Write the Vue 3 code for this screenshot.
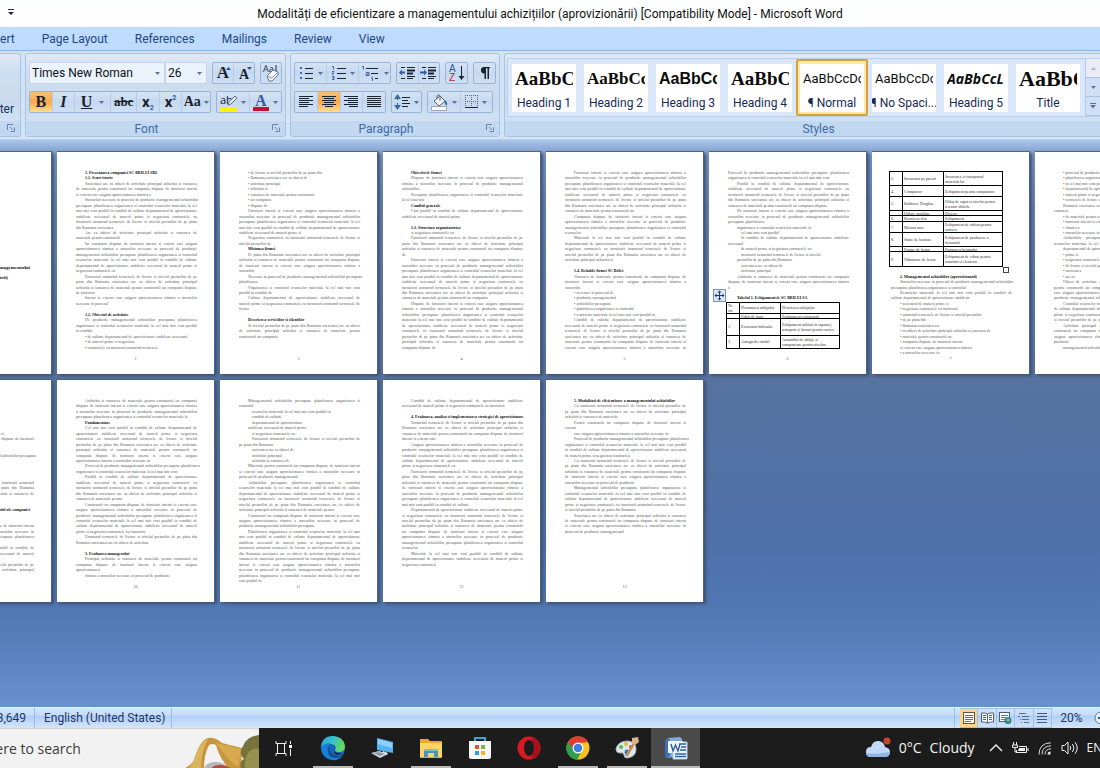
<script setup>
import { h } from 'vue'

const Caret = () =>
  h('svg', { class: 'caret', viewBox: '0 0 5 3', width: 5, height: 3, 'aria-hidden': 'true' }, [
    h('path', { d: 'M0 0h5L2.500 3z', fill: '#5b7396' })
  ])

const Launcher = () =>
  h('svg', { class: 'launcher', viewBox: '0 0 8 8', width: 8, height: 8, 'aria-hidden': 'true' }, [
    h('path', { d: 'M.5 6V.5H6', fill: 'none', stroke: '#6785ad' }),
    h('path', { d: 'M3 3l3 3M7.500 3.500v4h-4', fill: 'none', stroke: '#6785ad' })
  ])

// Draws text rows as horizontal bars: each entry is [x, y, width].
const Lines = (props) =>
  h('svg', { viewBox: '0 0 16 14', width: 16, height: 14, 'aria-hidden': 'true' },
    props.rows.map(([x, y, w]) => h('rect', { x, y, width: w, height: 1, fill: '#1c2330' })))
Lines.props = ['rows']

const alignRows = {
  left: [[1, 1, 14], [1, 3, 10], [1, 5, 14], [1, 7, 10], [1, 9, 14], [1, 11, 9]],
  center: [[1, 1, 14], [3, 3, 10], [1, 5, 14], [3, 7, 10], [1, 9, 14], [4, 11, 8]],
  right: [[1, 1, 14], [5, 3, 10], [1, 5, 14], [5, 7, 10], [1, 9, 14], [6, 11, 9]],
  justify: [[1, 1, 14], [1, 3, 14], [1, 5, 14], [1, 7, 14], [1, 9, 14], [1, 11, 14]]
}

const tabs = ['Insert', 'Page Layout', 'References', 'Mailings', 'Review', 'View']

const styles = [
  { sample: 'AaBbC', name: 'Heading 1', look: 'serif-lg' },
  { sample: 'AaBbCcI', name: 'Heading 2', look: 'serif-md' },
  { sample: 'AaBbCc', name: 'Heading 3', look: 'sans-bold' },
  { sample: 'AaBbC', name: 'Heading 4', look: 'serif-lg' },
  { sample: 'AaBbCcDc', name: '¶ Normal', look: 'plain', on: true },
  { sample: 'AaBbCcDc', name: '¶ No Spaci...', look: 'plain' },
  { sample: 'AaBbCcL', name: 'Heading 5', look: 'bold-italic' },
  { sample: 'AaBbC', name: 'Title', look: 'serif-xl' }
]

const words = ('societatea are ca obiect de activitate principal achizitia si vanzarea de materiale pentru ' +
  'constructii iar compania dispune de furnizori interni si externi care asigura aprovizionarea ritmica ' +
  'a stocurilor necesare in procesul de productie managementul achizitiilor presupune planificarea ' +
  'organizarea si controlul resurselor materiale la cel mai mic cost posibil in conditii de calitate ' +
  'departamentul de aprovizionare stabileste necesarul de materii prime si negociaza contractele cu ' +
  'furnizorii urmarind termenele de livrare si nivelul preturilor de pe piata din Romania').split(' ')
let cursor = 0
const WIDTH = 121
const fill = (px) => {
  const max = px / 1.6
  let out = ''
  while (true) {
    const w = words[cursor % words.length]
    if (out && out.length + w.length + 1 > max) break
    out += (out ? ' ' : '') + w
    cursor++
    if (out.length >= max) break
  }
  return out
}
const cap = (s) => s.charAt(0).toUpperCase() + s.slice(1)

const line = (kind, indent, end, text) => ({ kind: kind === 'line' && end === WIDTH ? 'line full' : kind, indent, width: end - indent, text })
const P = (n, last = WIDTH, indent = 9) =>
  Array.from({ length: n }, (_, i) => {
    const start = i === 0 ? indent : 0
    const end = i === n - 1 ? last : WIDTH
    const t = fill(end - start)
    return line('line', start, end, i === 0 ? cap(t) : t)
  })
const L = (...ends) => ends.map((e) => line('line', 9, e, '• ' + fill(e - 9)))
const S = (indent, ...ends) => ends.map((e) => line('line', indent, e, fill(e - indent + 3)))
const H = (text, end = 80) => [line('head', 9, end, text)]
const B = (n = 1) => Array.from({ length: n }, () => line('blank', 0, 0, ''))
const T = (span, rows) => [{ kind: 'table', span, rows }]

const pages = [
  { cover: true, lines: [] },
  { no: '2', lines: [
    H('1. Prezentarea companiei SC BRILEI SRL', 79), H('1.1. Scurt istoric', 33), P(3, 79), P(6, 41), P(2, 46),
    P(6, 49), P(4, 27), P(2, 36), B(), H('1.2. Obiectul de activitate', 50), P(3, 20), L(111, 63, 84)
  ] },
  { no: '3', lines: [
    L(93, 79, 48, 40, 73, 31, 36), P(5, 71), P(2, 38), H('Misiunea firmei', 39), P(4, 28), P(2, 12),
    P(2, 41), P(3, 14), B(), H('Descrierea serviciilor si clientilor', 72), P(3, 40)
  ] },
  { no: '4', lines: [
    H('Obiectivele firmei', 41), P(3, 25), P(2, 24), H('Conditii generale', 33), P(2, 63), B(),
    H('1.3. Structura organizatorica', 48), S(9, 64), P(4, 10), P(8, 85), P(9, 32)
  ] },
  { no: '5', lines: [
    P(8, 84), P(4, 13), P(5, 53), B(), H('1.4. Relatiile firmei SC Brilei', 68), P(3, 14),
    L(46, 50, 59, 69, 94), P(6)
  ] },
  { no: '6', anchor: true, lines: [
    P(2, 115, 0), P(5, 99), P(3, 42), S(9, 87), S(13, 53), P(2, 17, 13), S(13, 91, 106), S(9, 77), S(13, 64, 57),
    P(3, 9), B(), H('Tabelul 1. Echipamentele SC BRILEI SA', 75),
    T(9, [[11, 'Nr. crt.', 'Denumirea utilajului', 'Descrierea utilajului'], [5, '', 'Utilaj de baza', 'Echipament constructii'],
      [17, '1.', 'Excavator hidraulic', 'Echipament utilizat la sapaturi, transport si lucrari pentru cariere'],
      [13, '2.', 'Autogreder mobil', 'Ansamblu de utilaje si componente pentru nivelare']])
  ] },
  { no: '7', handle: true, lines: [
    T(19, [[14, '3.', 'Incarcator pe pneuri', 'Incarcarea si transportul materialelor'], [11, '4.', 'Compactor', 'Echipament pentru compactare'],
      [14, '5.', 'Buldozer Dragline', 'Utilaj de sapat si nivelat pentru terenuri dificile'], [5, '', 'Utilaje auxiliare', 'Diverse'],
      [6, '6.', 'Betoniera fixa', 'Echipament'], [11, '7.', 'Macara turn', 'Echipament de ridicat pentru santiere'],
      [14, '8.', 'Statie de betoane', 'Echipament de producere a betonului'], [5, '', 'Pompe de beton', 'Pomparea betonului'],
      [15, '9.', 'Vibratoare de beton', 'Echipament de vibrat pentru structuri si elemente']]),
    H('2. Managementul achizitiilor (aprovizionarii)', 92), P(2, 81), P(2, 94),
    L(59, 67, 92, 44, 45, 108, 65, 70), S(9, 81), L(61)
  ] },
  { no: '8', lines: [
    L(110, 104, 112, 108, 116, 110), P(2, 13), L(112, 100, 36, 108), P(2), S(9, 110), L(33, 100, 108, 25, 24),
    P(4), P(4), P(4, 33), S(9, 116)
  ] },
  { no: '9', lines: [
    S(0, 89, 88, 60, 70, 50, 88, 106), P(1, WIDTH, 0), S(0, 50, 60), P(1, WIDTH, 9), S(0, 60, 70, 50, 80), P(3), B(2),
    [line('head', 20, 121, '2.3. Particularitatile procesului de achizitii ale companiei')], B(2), P(3), S(0, 40), P(2), S(0, 60), P(2)
  ] },
  { no: '10', lines: [
    P(4, 118), H('Fundamentare', 27), P(7, 83), P(2, 107), P(5, 59), P(6, 71), P(2, 87), B(),
    H('3. Evaluarea managerului', 57), P(3, 27), S(9, 110)
  ] },
  { no: '11', lines: [
    P(2, 14), S(13, 104, 64, 65), S(9, 66), S(13, 65), P(2, 36, 13), S(13, 63, 52, 59), P(3, 69), P(6, 115), P(3, 79), P(10, 38)
  ] },
  { no: '12', lines: [
    P(2, 105), B(), H('4. Evaluarea, analiza si implementarea strategiei de aprovizionare', 121),
    P(4, 37), P(5, 66), P(7, 90), P(8, 21), P(3, 37)
  ] },
  { no: '13', lines: [
    H('5. Modalitati de eficientizare a managementului achizitiilor', 112), P(3, 62), P(2, 17), S(9, 107),
    P(4, 66), P(5, 84), P(5, 75), P(4, 58)
  ] }
].map((p) => ({ ...p, lines: p.lines.flat() }))
const sheetRows = [pages.slice(0, 8), pages.slice(8)]
</script>

<template>
  <div class="word">
    <header class="titlebar">
      <button class="qat" aria-label="Customize Quick Access Toolbar">
        <svg width="6" height="7" viewBox="0 0 6 7"><path d="M0 0h6v1H0zM0 3h6L3 6z" fill="#222b45" /></svg>
      </button>
      <h1>Modalități de eficientizare a managementului achizițiilor (aprovizionării) [Compatibility Mode] - Microsoft Word</h1>
    </header>

    <nav class="tabs">
      <button v-for="t in tabs" :key="t">{{ t }}</button>
    </nav>

    <section class="ribbon">
      <div class="group clipboard">
        <div class="body"><span>Format Painter</span></div>
        <footer><Launcher /></footer>
      </div>

      <div class="group font">
        <div class="body">
          <div class="row">
            <div class="combos">
              <label class="combo family"><select aria-label="Font"><option>Times New Roman</option></select><Caret /></label>
              <label class="combo size"><select aria-label="Font size"><option>26</option></select><Caret /></label>
            </div>
            <div class="set grow">
              <button aria-label="Grow font"><span class="ser g1">A</span><svg class="tip" width="5" height="3" viewBox="0 0 5 3"><path d="M0 3h5L2.500 0z" fill="#2d4f94" /></svg></button>
              <button aria-label="Shrink font"><span class="ser g2">A</span><svg class="tip" width="5" height="3" viewBox="0 0 5 3"><path d="M0 0h5L2.500 3z" fill="#2d4f94" /></svg></button>
            </div>
            <div class="set one">
              <button aria-label="Clear formatting">
                <svg width="20" height="20" viewBox="0 0 20 20">
                  <text x="2" y="9" font-family="Open Sans, sans-serif" font-size="9" fill="#1f2a44">Aa</text><path d="M15 2v8" stroke="#1f2a44" />
                  <path d="M6 13l6-6 5 2v3l-6 6H8z" fill="#f3f5fa" stroke="#66738f" /><path d="M6 13l5 2 6-6" fill="none" stroke="#8c98b2" />
                </svg>
              </button>
            </div>
          </div>
          <div class="row">
            <div class="set letters">
              <button class="on ser b">B</button>
              <button class="ser i">I</button>
              <button class="ser u wide"><span>U</span><Caret /></button>
              <button class="ser s">abc</button>
              <button class="sx">x<sub>2</sub></button>
              <button class="sx">x<sup>2</sup></button>
              <button class="ser aa"><span>Aa</span><Caret /></button>
            </div>
            <div class="set colors">
              <button aria-label="Highlight">
                <svg width="18" height="19" viewBox="0 0 18 19">
                  <rect y="14" width="17" height="4" fill="#fff200" />
                  <text x="0" y="11" font-family="Open Sans, sans-serif" font-size="11" fill="#1a2030">ab</text>
                  <path d="M8 12l1-3 6-6 2 2-6 6z" fill="#e8edf4" stroke="#60708c" />
                </svg><Caret />
              </button>
              <button aria-label="Font color">
                <svg width="18" height="19" viewBox="0 0 18 19">
                  <rect x="1" y="14" width="16" height="4" fill="#c8102e" />
                  <text x="3" y="13" font-family="Liberation Serif, serif" font-weight="700" font-size="16" fill="#35599c">A</text>
                </svg><Caret />
              </button>
            </div>
          </div>
        </div>
        <footer>Font<Launcher /></footer>
      </div>

      <div class="group para">
        <div class="body">
          <div class="row">
            <div class="set lists">
              <button aria-label="Bullets">
                <svg width="16" height="14" viewBox="0 0 16 14"><g fill="#3f66a8"><rect x="1" y="1" width="2" height="2" /><rect x="1" y="6" width="2" height="2" /><rect x="1" y="11" width="2" height="2" /></g><path d="M6 2.500h8M6 7.500h8M6 12.500h8" stroke="#1c2330" /></svg><Caret />
              </button>
              <button aria-label="Numbering">
                <svg width="16" height="14" viewBox="0 0 16 14"><path d="M1 .5h1.500v3M1 5.500h2L1 8h2M1 10.500h2v3H1M1.500 12H3" stroke="#3f66a8" fill="none" /><path d="M6 2.500h9M6 7.500h9M6 12.500h9" stroke="#1c2330" /></svg><Caret />
              </button>
              <button aria-label="Multilevel list">
                <svg width="20" height="15" viewBox="0 0 20 15"><path d="M1 .5h1.500v3M5 6.500h3v3H5V8h3M11 10v.5M10 12h1.500v3" stroke="#3f66a8" fill="none" /><path d="M5 2.500h12M10 7.500h7M14 12.500h3" stroke="#1c2330" /></svg><Caret />
              </button>
            </div>
            <div class="set dents">
              <button aria-label="Decrease indent"><svg width="18" height="14" viewBox="0 0 18 14"><path d="M2 1.500h4M8 1.500h8M2 12.500h4M8 12.500h6M8 10.500h8" stroke="#1c2330" /><path d="M8 4.500h8M8 7.500h6" stroke="#1c2330" stroke-width="2" /><path d="M0 6.500l3-3v2h3v2H3v2z" fill="#2f5aa8" /></svg></button>
              <button aria-label="Increase indent"><svg width="18" height="14" viewBox="0 0 18 14"><path d="M2 1.500h4M8 1.500h8M2 12.500h4M8 12.500h6M8 10.500h8" stroke="#1c2330" /><path d="M8 4.500h8M8 7.500h6" stroke="#1c2330" stroke-width="2" /><path d="M7 6.500l-3-3v2H0v2h4v2z" fill="#2f5aa8" /></svg></button>
            </div>
            <div class="set one">
              <button aria-label="Sort">
                <svg width="17" height="18" viewBox="0 0 17 18"><text x="1" y="8" font-family="Liberation Sans, sans-serif" font-size="10" fill="#2f5aa8">A</text><text x="1" y="17" font-family="Liberation Sans, sans-serif" font-size="10" fill="#b02a3c">Z</text><path d="M13.500 2v12" stroke="#1c2330" /><path d="M10.500 12h6l-3 4z" fill="#1c2330" /></svg>
              </button>
            </div>
            <div class="set one">
              <button aria-label="Show formatting marks">
                <svg width="12" height="14" viewBox="0 0 12 14"><path d="M5 1h6v1.200H10V13H8.500V2.200H7V13H5.500V7.500A3.200 3.200 0 0 1 5 1z" fill="#1c2330" /></svg>
              </button>
            </div>
          </div>
          <div class="row">
            <div class="set aligns">
              <button aria-label="Align left"><Lines :rows="alignRows.left" /></button>
              <button class="on" aria-label="Center"><Lines :rows="alignRows.center" /></button>
              <button aria-label="Align right"><Lines :rows="alignRows.right" /></button>
              <button aria-label="Justify"><Lines :rows="alignRows.justify" /></button>
            </div>
            <div class="set spacing">
              <button aria-label="Line spacing">
                <svg width="17" height="16" viewBox="0 0 17 16"><path d="M3.500 2v12" stroke="#2f5aa8" stroke-dasharray="4 3" /><path d="M0 5h7L3.500 0zM0 11h7l-3.500 5z" fill="#3c6a9e" /><path d="M8 3.500h8M8 6.500h6M8 9.500h8M8 12.500h6" stroke="#1c2330" /></svg><Caret />
              </button>
            </div>
            <div class="set shades">
              <button aria-label="Shading">
                <svg width="18" height="17" viewBox="0 0 18 17"><rect x=".5" y="12.500" width="15" height="4" fill="#fff" stroke="#9aa7bd" /><path d="M3 7l6-5 5 5-6 5z" fill="#f4f6fa" stroke="#55637f" /><path d="M6 5V2q2-3 3 0v5" fill="none" stroke="#55637f" /><path d="M13 6q4 1 3 6-2-1-3-5z" fill="#3c6a9e" /></svg><Caret />
              </button>
              <button aria-label="Borders">
                <svg width="14" height="14" viewBox="0 0 14 14"><path d="M.5 0v13M6.500 0v13M12.500 0v13M0 .5h13M0 6.500h13" stroke="#55637f" stroke-dasharray="1 1" /><path d="M0 12.500h13" stroke="#1c2330" /></svg><Caret />
              </button>
            </div>
          </div>
        </div>
        <footer>Paragraph<Launcher /></footer>
      </div>

      <div class="group styles">
        <div class="gallery">
          <button v-for="s in styles" :key="s.name" class="style" :class="{ picked: s.on }">
            <span class="card"><span class="sample" :class="s.look"><span>{{ s.sample }}</span></span><span class="name">{{ s.name }}</span></span>
          </button>
          <div class="scroller">
            <button aria-label="Previous row" class="off"><svg width="5" height="3" viewBox="0 0 5 3"><path d="M0 3h5L2.500 0z" fill="#a8b4c6" /></svg></button>
            <button aria-label="Next row"><Caret /></button>
            <button aria-label="More"><svg width="6" height="6" viewBox="0 0 6 6"><path d="M0 0h6v1H0zM0 2h6L3 5.500z" fill="#5b7396" /></svg></button>
          </div>
        </div>
        <footer>Styles</footer>
      </div>
    </section>

    <main class="workspace">
      <div v-for="(row, r) in sheetRows" :key="r" class="sheet-row">
        <article v-for="p in row" :key="p.no || 'cover'" class="sheet">
          <div v-if="p.cover" class="cover"><p>Modalități de eficientizare a managementului</p><p class="second">achizițiilor (aprovizionării)</p></div>
          <div v-else class="text">
            <template v-for="(l, i) in p.lines" :key="i">
              <div v-if="l.kind === 'table'" class="holder" :style="{ gridRow: 'span ' + l.span }">
                <span v-if="p.anchor" class="anchor">
                  <svg width="13" height="13" viewBox="0 0 13 13"><rect x=".5" y=".5" width="12" height="12" fill="#dbe7f6" stroke="#7d93b5" /><path d="M6.500 2v9M2 6.500h9" stroke="#1f3a6e" /><path d="M4.500 3.500l2-2 2 2zM4.500 9.500l2 2 2-2zM3.500 4.500l-2 2 2 2zM9.500 4.500l2 2-2 2z" fill="#1f3a6e" /></svg>
                </span>
                <table>
                  <tbody>
                    <tr v-for="(t, k) in l.rows" :key="k" :style="{ height: t[0] + 'px' }">
                      <td v-for="c in 3" :key="c"><div :style="{ maxHeight: (t[0] - 1) + 'px' }">{{ t[c] }}</div></td>
                    </tr>
                  </tbody>
                </table>
                <span v-if="p.handle" class="handle"></span>
              </div>
              <p v-else :class="l.kind" :style="{ marginLeft: l.indent + 'px', width: l.width + 'px' }">{{ l.text }}</p>
            </template>
          </div>
          <span v-if="p.no" class="folio">{{ p.no }}</span>
        </article>
      </div>
    </main>

    <div class="status">
      <span class="cell count">Words: 13,649</span>
      <button class="cell lang">English (United States)</button>
      <div class="views">
        <button class="on" aria-label="Print layout"><svg width="12" height="12" viewBox="0 0 12 12"><rect x=".5" y=".5" width="11" height="11" fill="#fff" stroke="#5c5340" /><path d="M2 3.500h8M2 5.500h8M2 7.500h8M2 9.500h6" stroke="#6d6a60" /></svg></button>
        <button aria-label="Full screen reading"><svg width="13" height="12" viewBox="0 0 13 12"><path d="M6.500 2Q4 .5.500 1v9q3-.5 6 1 3-1.500 6-1V1Q9 .5 6.500 2z" fill="#fff" stroke="#4a5f86" /><path d="M6.500 2v9M2 3.500h3M2 5.500h3M2 7.500h3M8 3.500h3M8 5.500h3M8 7.500h3" stroke="#4a5f86" /></svg></button>
        <button aria-label="Web layout"><svg width="13" height="12" viewBox="0 0 13 12"><rect x=".5" y=".5" width="10" height="9" fill="#fff" stroke="#4a5f86" /><path d="M2 3.500h7M2 5.500h5M2 7.500h4" stroke="#6a7a98" /><circle cx="9" cy="8.500" r="3.500" fill="#3b7f86" /><path d="M7 8q2-3 4 0-1 3-4 0" fill="#79c09a" /></svg></button>
        <button aria-label="Outline"><svg width="12" height="12" viewBox="0 0 12 12"><path d="M1 1.500h7M4 4.500h7M4 7.500h7M6 10.500h5M0 4.500h2M2 7.500h1M3 10.500h1" stroke="#5a6d92" /></svg></button>
        <button aria-label="Draft"><svg width="12" height="12" viewBox="0 0 12 12"><path d="M1 1.500h10M1 4.500h10M1 7.500h10M1 10.500h10" stroke="#44557a" /></svg></button>
      </div>
      <button class="zoom">20%</button>
      <button class="minus" aria-label="Zoom out"><svg width="14" height="14" viewBox="0 0 14 14"><circle cx="7" cy="7" r="6" fill="#e6f0fc" stroke="#5a74a3" /><path d="M4 7h6" stroke="#3d557f" stroke-width="2" /></svg></button>
    </div>

    <div class="taskbar">
      <div class="search">
        <input aria-label="Search" placeholder="Type here to search" />
        <svg class="art" width="78" height="40" viewBox="0 0 78 40" aria-hidden="true">
          <path d="M2 40q8-3 11-9Q19 11 27 9q7-1 14 5 7 2 20 5l-1 21H48Q38 28 35 16q-6-3-8 2-4 9-4 22z" fill="#c6963f" />
          <path d="M13 31Q19 12 27 10l-3 7q-4 9-4 23H8z" fill="#dcb45f" />
          <path d="M35 14q13 3 25 6l-3 18-9-7z" fill="#d9a94f" />
          <path d="M23 40q1-6 10-7 9-1 15 7z" fill="#b9b6bb" /><path d="M30 40q2-4 9-4 7 0 11 4z" fill="#b04a3c" />
          <path d="M62 17q3-9 16-11v34H60q-2-8 3-10-6-6-1-13z" fill="#77713c" /><path d="M67 24q5-6 11-4v20H64q-1-10 3-16z" fill="#97904f" />
        </svg>
      </div>
      <div class="apps">
        <button aria-label="Task view"><svg width="18" height="17" viewBox="0 0 18 17" fill="none" stroke="#f2f2f2"><path d="M1 1v2.500h10V1M1 16v-2.500h10V16M2.500 4v9M9.500 4v9M15.500 1v3M15.500 9v7" /><rect x="14" y="5" width="3" height="3" fill="#fff" stroke="none" /></svg></button>
        <button class="open" aria-label="Microsoft Edge">
          <svg width="26" height="26" viewBox="0 0 26 26"><defs><linearGradient id="eg" x1="0" y1="0" x2="1" y2=".3"><stop offset="0" stop-color="#2a9fe0" /><stop offset=".55" stop-color="#38c3c9" /><stop offset="1" stop-color="#66d956" /></linearGradient></defs>
            <circle cx="13" cy="13" r="12" fill="#1565b8" /><path d="M1 12Q2 1 13 1q11 1 12 10 0 6-6 6-4 0-4-2 2-3-1-5Q8 6 1 12z" fill="url(#eg)" /><path d="M1 12q5-5 9-3-5 5-1 10 5 5 13 2-4 5-10 4Q2 23 1 12z" fill="#1680d6" /><path d="M10 11q-2 6 3 9 5 2 9 0 0 1-1 1-5 4-11 0-4-5 0-10z" fill="#124b91" /><path d="M14 16q2 3 8 2-4 3-7 1z" fill="#1c1c1c" /></svg>
        </button>
        <button aria-label="This PC"><svg width="24" height="22" viewBox="0 0 24 22"><path d="M7 1l16 4v11L7 13z" fill="#55b4ef" /><path d="M8 2l14 4v5L8 7z" fill="#8fd0f8" /><path d="M13 14l5 2-1 2-5-1zM1 16l8-2 9 3-8 4z" fill="#d5dde4" /><path d="M3 16l6-1 6 2-5 2z" fill="#8d99a5" /></svg></button>
        <button class="open" aria-label="File Explorer"><svg width="24" height="22" viewBox="0 0 24 22"><path d="M1 2h8l2 2h12v17H1z" fill="#e9a92c" /><path d="M1 6h22v14H1z" fill="#fbd568" /><path d="M5 20v-8h14v8h-4v-4H9v4z" fill="#4c94b4" /><path d="M5 12h14v2H5z" fill="#7cbdd2" /></svg></button>
        <button aria-label="Microsoft Store"><svg width="24" height="24" viewBox="0 0 24 24"><path d="M7 6V2h10v4" fill="none" stroke="#3aa5dc" stroke-width="2" /><path d="M1 5h22v16q0 2-2 2H3q-2 0-2-2z" fill="#f5f6f8" /><path d="M7 9h4v4H7z" fill="#e3542b" /><path d="M13 9h4v4h-4z" fill="#7cb342" /><path d="M7 15h4v4H7z" fill="#2d9fe3" /><path d="M13 15h4v4h-4z" fill="#f6b51d" /></svg></button>
        <button aria-label="Opera"><svg width="24" height="24" viewBox="0 0 24 24"><circle cx="12" cy="12" r="11.500" fill="#d71922" /><path d="M19 3q4 4 4 9t-4 9l-4 1V2z" fill="#a90f1d" /><ellipse cx="12" cy="12" rx="5" ry="8" fill="#1c1c1c" /></svg></button>
        <button class="open" aria-label="Chrome"><svg width="24" height="24" viewBox="0 0 24 24"><circle cx="12" cy="12" r="11.500" fill="#f9c31f" /><path d="M2 6A11.500 11.500 0 0 1 22 6.200L12 7v5l-5 2z" fill="#df3d31" /><path d="M2 6A11.500 11.500 0 0 0 11 23.500L16 15l-8-1z" fill="#2f9e4f" /><circle cx="12" cy="12" r="5.500" fill="#fff" /><circle cx="12" cy="12" r="4.300" fill="#3f7de0" /></svg></button>
        <button class="open" aria-label="Paint"><svg width="26" height="24" viewBox="0 0 26 24"><path d="M2 13Q4 5 14 5q8 1 8 8 0 8-9 9-3 0-3-3t-4-2q-4 0-4-4z" fill="#dfe6ec" stroke="#a8b7c2" /><circle cx="7" cy="11" r="2" fill="#5fb548" /><circle cx="12" cy="8" r="2" fill="#e5b73b" /><circle cx="17" cy="11" r="2" fill="#d8503d" /><circle cx="13" cy="16" r="2.500" fill="#2c78c9" /><path d="M11 20L19 7l2 1-7 12z" fill="#c98d4b" /><path d="M18 2l6-1 1 5-4 3-3-2z" fill="#d8b48b" /></svg></button>
        <button class="open current" aria-label="Microsoft Word"><svg width="24" height="24" viewBox="0 0 24 24"><path d="M4 2L16 1l2 2v17L3 22 1 20V5z" fill="#7ca8dc" /><path d="M4 2l2 2v16l-3 2-2-2V5z" fill="#3b6fb6" /><path d="M9 6h14v17H9z" fill="#f8fbff" stroke="#b8c9df" /><path d="M4 5h15v12H4z" fill="#f1f6fc" /><path d="M7 8l2 7 2.500-6 2.500 6 2-7M15 8h7M17 11h5M16 14h6M11 18h11M11 20.500h11" fill="none" stroke="#2c5da7" stroke-width="1.400" /></svg></button>
      </div>
      <div class="tray">
        <button class="weather">
          <svg width="26" height="22" viewBox="0 0 26 22"><circle cx="22" cy="4" r="3.500" fill="#c8442b" /><path d="M6 20q-5 0-5-5t5-5q2-7 8-6 5 1 6 6 5 1 5 5t-5 5z" fill="#c2d9f7" /><path d="M6 20q-5 0-5-4 8 2 24-1 0 5-5 5z" fill="#8fb4e6" /></svg>
          <span>0°C</span><span>Cloudy</span>
        </button>
        <button aria-label="Show hidden icons"><svg width="14" height="8" viewBox="0 0 14 8"><path d="M1 7l6-6 6 6" fill="none" stroke="#f2f2f2" stroke-width="1.400" /></svg></button>
        <button aria-label="Battery"><svg width="17" height="13" viewBox="0 0 17 13" fill="none" stroke="#f2f2f2"><path d="M7 4.500h7.500v6h-10V8M16 6v3" /><path d="M7 6h6v3H6z" fill="#f2f2f2" stroke="none" /><path d="M1.500 0v3M4.500 0v3M.5 3h5v2.500h-5zM3 5v5h2" /></svg></button>
        <button aria-label="Wi-Fi"><svg width="14" height="13" viewBox="0 0 14 13" fill="none" stroke="#d4d4d4"><path d="M1 12.500Q1 1 13 .8M4 12.500Q4 4 13 3.800M7 12.500Q7 7 13 6.800" /><path d="M9.500 12.500q0-3 3-3v3z" fill="#f2f2f2" stroke="none" /></svg></button>
        <button aria-label="Volume"><svg width="17" height="14" viewBox="0 0 17 14" fill="none" stroke="#f2f2f2"><path d="M1 4.500h2.500L7 1v12L3.500 9.500H1z" /><path d="M9 5q1.500 2 0 4M11.500 3q3 4 0 8M14 1.200q4.500 6 0 11.600" /></svg></button>
        <button class="kbd">ENG</button>
      </div>
    </div>
  </div>
</template>

<style>
html, body { margin: 0; overflow: hidden; }
</style>

<style scoped>
* { box-sizing: border-box; }
button { font: inherit; color: inherit; background: none; border: 0; padding: 0; margin: 0; display: flex; align-items: center; justify-content: center; }
svg { display: block; flex: none; }
p { margin: 0; }
.word { height: 100vh; display: flex; flex-direction: column; overflow: hidden; font-family: Roboto, "Open Sans", sans-serif; font-size: 12px; line-height: 16px; color: #15305f; }

.titlebar { position: relative; flex: none; height: 27px; background: #fdfefe; display: flex; align-items: center; justify-content: center; }
.titlebar h1 { margin: 0; font-size: 12px; font-weight: 400; color: #111; white-space: nowrap; }
.qat { position: absolute; left: 8px; top: 9px; }

.tabs { flex: none; height: 23px; display: flex; align-items: center; gap: 27px; margin-left: -16px; background: #bfdbff; color: #23477f; white-space: nowrap; }

.ribbon { flex: none; height: 90px; display: flex; gap: 4px; padding: 2px 0 2px; background: #d3e3f6; border-top: 1px solid #8db2e3; border-bottom: 1px solid #b9d0ed; overflow: hidden; }
.group { flex: none; display: flex; flex-direction: column; border: 1px solid #a9c4e2; border-radius: 3px; background: linear-gradient(#dfeaf7, #cfdff1 20%, #c9daee 60%, #d8e6f6); }
.group footer { position: relative; flex: none; height: 15px; background: #c1d8f0; color: #3e6aaa; display: flex; align-items: center; justify-content: center; padding-right: 18px; }
.group .body { flex: 1; padding: 8px 3px 0; display: flex; flex-direction: column; gap: 7px; }
.launcher { position: absolute; right: 5px; top: 3px; }
.clipboard { width: 21px; border-left: 0; border-radius: 0 3px 3px 0; }
.clipboard .body { padding: 0 6px 4px; justify-content: flex-end; align-items: flex-end; white-space: nowrap; }
.font { width: 261px; }
.para { width: 210px; }
.row { display: flex; gap: 5px; height: 22px; }
.combos { display: flex; width: 178px; background: #eaf2fb; }
.combo { position: relative; display: flex; align-items: center; border: 1px solid #c3d6ee; }
.family { width: 136px; }
.size { width: 42px; }
.combo select { appearance: none; width: 100%; height: 20px; border: 0; padding: 0 2px; background: none; font: inherit; color: #10131a; }
.combo .caret { position: absolute; right: 4px; top: 9px; }
.set { display: flex; border: 1px solid #98b4d8; border-radius: 2px; background: linear-gradient(#d5e4f5, #c5d8ef 50%, #cfe0f4); }
.set button { flex: 1; gap: 3px; border-right: 1px solid #b7cce6; }
.set button:last-child { border-right: 0; }
.set .on { background: linear-gradient(#f6c17a, #f9a94a 50%, #fde08c); }
.ser { font-family: "Liberation Serif", serif; font-weight: 700; color: #1a1f2b; }
.grow { width: 45px; }
.grow button { position: relative; }
.g1 { font-size: 17px; }
.g2 { font-size: 14px; padding-top: 3px; }
.tip { position: absolute; right: 2px; top: 4px; }
.one { width: 23px; }
.letters { width: 183px; }
.letters .b, .letters .i, .letters .u { font-size: 16px; }
.letters .i { font-style: italic; }
.letters .wide { flex: 0 0 36px; gap: 7px; }
.letters .u span { text-decoration: underline; }
.letters .s { flex: 0 0 26px; font-size: 13px; text-decoration: line-through; }
.letters .sx { font-size: 15px; font-weight: 700; color: #1a1f2b; line-height: 14px; }
.sx sub, .sx sup { font-size: 7px; color: #2f5aa8; line-height: 7px; }
.sx sub { align-self: flex-end; }
.sx sup { align-self: flex-start; padding-top: 3px; }
.sx.sx { gap: 0; }
.letters .aa { flex: 0 0 28px; font-size: 14px; }
.colors { width: 66px; }
.lists { width: 98px; }
.dents { width: 44px; }
.aligns { width: 92px; }
.spacing { width: 31px; }
.shades { width: 66px; }

.styles { flex: 1 0 0; min-width: 0; border-right: 0; border-radius: 3px 0 0 3px; justify-content: space-between; }
.group.styles footer { padding: 0 0 0 32px; }
.gallery { margin: 4px 0 0 2px; height: 59px; display: flex; border: 1px solid #b9d0ed; border-right: 0; background: #d9e7f8; overflow: hidden; }
.style { flex: none; width: 72px; }
.card { width: 64px; height: 48px; background: #fff; display: flex; flex-direction: column; align-items: center; overflow: hidden; }
.sample { height: 30px; width: 58px; display: flex; align-items: center; overflow: hidden; white-space: nowrap; color: #0c0c0c; }
.name { color: #182a55; white-space: nowrap; line-height: 18px; }
.picked { border: 2px solid #d9a03c; border-radius: 2px; background: #ffe9a8; }
.serif-lg { font: 700 19px "Liberation Serif", serif; }
.serif-md { font: 700 17px "Liberation Serif", serif; }
.serif-xl { font: 700 22px "Liberation Serif", serif; }
.sans-bold { font: 700 16px "Liberation Sans", sans-serif; }
.plain { font-size: 13px; }
.bold-italic { font: italic 700 14px "Open Sans", sans-serif; }
.scroller { margin-left: 1px; flex: 1; display: flex; flex-direction: column; border-left: 1px solid #b3cbe8; }
.scroller button { flex: 1; border-bottom: 1px solid #a9c2e0; background: #cfe0f6; }
.scroller .off { background: #e9edf3; }

.workspace { flex: 1; min-height: 0; overflow: hidden; padding-top: 11px; display: flex; flex-direction: column; gap: 5px; background: linear-gradient(#a9c5ec, #7795c4 3%, #6683af 12%, #58739f 38%, #4e70a8 70%, #5179b4 84%, #6791cd); }
.sheet-row { display: flex; gap: 5px; margin-left: -106px; }
.sheet { position: relative; flex: none; width: 158px; height: 223px; background: #fff; border: 1px solid #4d6484; border-width: 1px 1px 0 0; padding: 18px 17px 0 19px; box-shadow: 2px 2px 3px #3d5273; color: #5a5a5a; font: 4px/5px "Liberation Serif", serif; }
.text { height: 180px; display: grid; grid-auto-rows: calc(100% / 33); grid-template-columns: 121px; }
.text p { min-height: 0; white-space: nowrap; }
.text .full { text-align-last: justify; }
.text .head { font-weight: 700; color: #111; }
.folio { position: absolute; left: 0; right: 0; bottom: 13px; text-align: center; }
.cover { display: flex; flex-direction: column; gap: 4px; padding-top: 95px; font: 700 5px/6px "Liberation Serif", serif; color: #111; text-align: right; white-space: nowrap; }
.cover p { margin-right: 4px; }
.cover .second { margin-right: 26px; }
.holder { position: relative; padding-top: 1px; }
.holder table { border-collapse: collapse; width: 114px; margin-left: -2px; table-layout: fixed; color: #333; }
td { border: 1px solid #000; padding: 0 1px; vertical-align: middle; }
td:first-child { width: 13px; }
td:nth-child(2) { width: 41px; }
td div { overflow: hidden; line-height: 5px; }
.anchor { position: absolute; left: -15px; top: -12px; }
.handle { position: absolute; left: 112px; top: 97px; width: 6px; height: 6px; border: 1px solid #444; background: #fff; }

.status { flex: none; height: 21px; display: flex; align-items: stretch; border-top: 1px solid #eaf3fd; background: linear-gradient(#d6e6f9, #c6dbf7 35%, #b0d0f8 40%, #d4e4f8); color: #1d3566; white-space: nowrap; }
.cell { display: flex; align-items: center; border-right: 1px solid #9dbbe2; padding: 0 8px; }
.count { width: 35px; justify-content: flex-end; }
.lang { padding: 0 5px 0 9px; }
.views { margin-left: auto; display: flex; width: 98px; border-left: 1px solid #9dbbe2; padding-left: 5px; }
.views button { flex: 1; border: 1px solid #a3bfe3; border-left: 0; }
.views .on { background: #fcd58b; }
.zoom { width: 39px; }
.minus { width: 18px; margin-right: -9px; padding-left: 2px; }

.taskbar { flex: none; height: 40px; display: flex; background: #1c1c1c; color: #f4f4f4; font-family: "Open Sans", sans-serif; font-size: 14px; }
.search { position: relative; width: 259px; background: #f2f2f2; border-top: 1px solid #d2d2d2; overflow: hidden; display: flex; align-items: center; }
.search input { width: 190px; margin-left: -48px; border: 0; padding: 0; background: none; font: inherit; }
.search input::placeholder { color: #3b3b3b; opacity: 1; }
.art { position: absolute; right: 0; top: 0; }
.apps { display: flex; }
.apps button { position: relative; width: 49px; }
.open::after { content: ""; position: absolute; left: 5px; right: 4px; bottom: 0; height: 2px; background: #b9b9b9; }
.current { background: #4a4a4a; }
.current::after { left: 0; right: 0; }
.tray { margin-left: auto; margin-right: -11px; display: flex; align-items: center; gap: 9px; }
.weather { gap: 8px; margin-right: 5px; }
.kbd { font-size: 12px; }
</style>
